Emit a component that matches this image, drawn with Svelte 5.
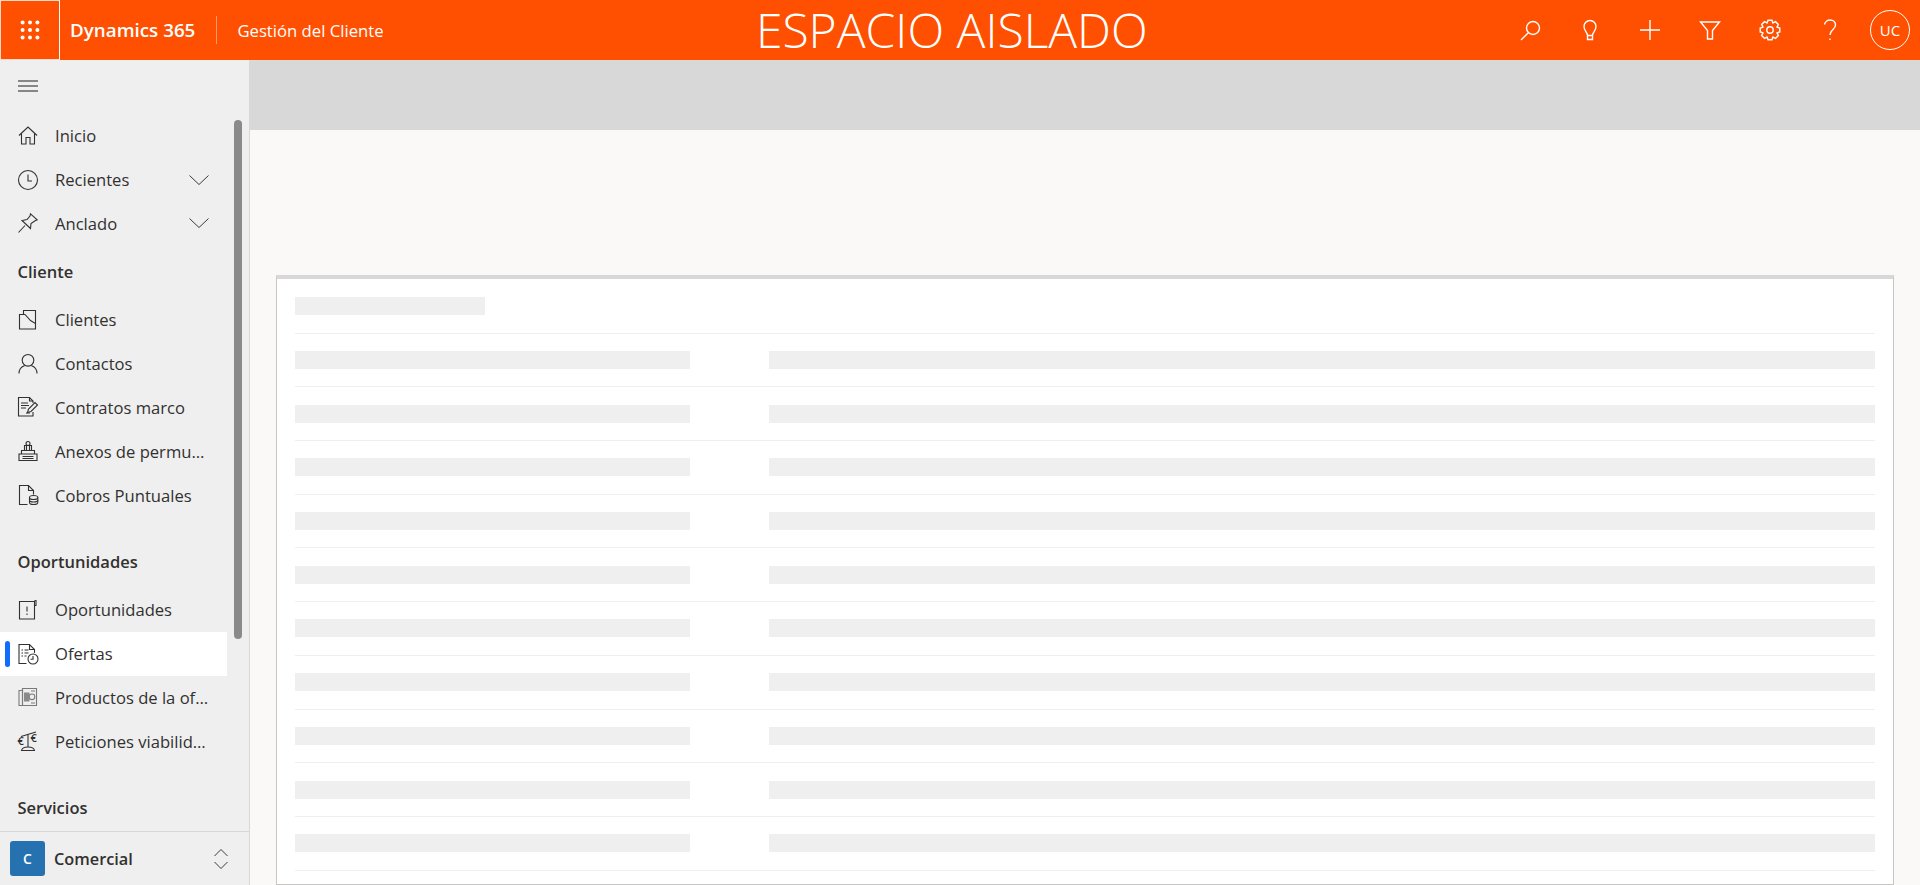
<script lang="ts">
	type Item = { label: string; icon: string; more?: boolean; active?: boolean };

	const top: Item[] = [
		{ label: 'Inicio', icon: 'home' },
		{ label: 'Recientes', icon: 'clock', more: true },
		{ label: 'Anclado', icon: 'pin', more: true }
	];

	const groups: { title: string; items: Item[] }[] = [
		{
			title: 'Cliente',
			items: [
				{ label: 'Clientes', icon: 'account' },
				{ label: 'Contactos', icon: 'contact' },
				{ label: 'Contratos marco', icon: 'contract' },
				{ label: 'Anexos de permutas', icon: 'annex' },
				{ label: 'Cobros Puntuales', icon: 'coins' }
			]
		},
		{
			title: 'Oportunidades',
			items: [
				{ label: 'Oportunidades', icon: 'opportunity' },
				{ label: 'Ofertas', icon: 'quote', active: true },
				{ label: 'Productos de la oferta', icon: 'products' },
				{ label: 'Peticiones viabilidad', icon: 'scale' }
			]
		},
		{ title: 'Servicios', items: [] }
	];

	const icons: Record<string, string[]> = {
		home: ['M1 9.5 10 1l9 8.5', 'M3.5 7.5V18H8v-6.5h4V18h4.500V7.500'],
		clock: ['M10 .5a9.500 9.500 0 1 0 0 19 9.500 9.500 0 0 0 0-19Z', 'M10 4.500V11h4'],
		pin: ['M.5 19.500 7 12.500', 'M12.500 .8 19.200 6.800l-1.700.7-4.500 3L12.500 15.500 4 7.500l5-1L12 3Z'],
		account: ['M5.500 4.500V.5h12v13', 'M1.500 4.500H7l5.500 6 5 3v5.500h-16Z'],
		contact: ['M10 .5a5.800 5.800 0 1 0 0 11.600A5.800 5.800 0 0 0 10 .5Z', 'M1 19.500c0-4.500 3-7 5.800-8', 'M19 19.500c0-4.500-3-7-5.800-8'],
		contract: ['M15 6V4l-3.500-3.500H.5v18.500H15v-4', 'M11.500.5V4H15', 'M3 6h7M3 8.500h8M3 11h5M8 16h4', 'M9.500 15.500l1-3.500 6.500-6.500 2.500 2.500-6.500 6.500Z'],
		annex: ['M1 13h18v6.500H1Z', 'M3.500 13V9.500h13V13', 'M6.500 9.500V4.500h7v5', 'M8.500 9.500V4.500M11.500 4.500v5', 'M10 4.500a2 2 0 1 1 0-4 2 2 0 0 1 0 4Z', 'M4.500 15.500h11M4.500 17.500h11'],
		coins: ['M9.500 19.500H1.500V.5H10.500l5 5v4', 'M10.500 .5v5h5', 'M11.500 12.500c0-1.100 1.800-2 4-2s4.300.9 4.300 2-2.100 2-4.300 2-4-.9-4-2Z', 'M11.500 12.500v5c0 1.100 1.800 2 4 2s4.300-.9 4.300-2v-5', 'M11.500 15c0 1.100 1.800 2 4 2s4.300-.9 4.300-2'],
		opportunity: ['M1.500 1.500H16.500v17.500H1.500Z', 'M16.500 5.500h1.500V.5h-1.500', 'M9 6.500v5M9 13.500v1.500'],
		quote: ['M8.500 19.500H1V.5H11.500l5 5v3.500', 'M11.500 .5v5h5', 'M3.500 6h1.500M6.500 6h4M3.500 9h1.500M6.500 9h4M3.500 12h1.500M6.500 12h2', 'M15 10a5 5 0 1 0 0 10 5 5 0 0 0 0-10Z', 'M15 12v3.200h-2.500'],
		products: ['M1 3.500h3.500v15H1Z', 'M4.500 1.500H18.500V18.500H4.500Z', 'M14 7a2.800 2.800 0 1 0 0 5.600A2.800 2.800 0 0 0 14 7Z', 'M13 4h4M13 16h4'],
		scale: ['M10 3.500V16', 'M3 5.500 18 1', 'M3.500 19.500c.5-2.500 3.500-3.500 6.500-3.500s6 1 6.500 3.500Z']
	};

	// gear outline for the settings button, eight teeth round (0,0)
	const gear = Array.from({ length: 8 }, (_, i) => {
		const a = (i * Math.PI) / 4;
		const pt = (r: number, da: number) => `${(r * Math.sin(a + da)).toFixed(2)} ${(-r * Math.cos(a + da)).toFixed(2)}`;
		return `${i ? 'L' : 'M'}${pt(7.6, -0.39)}L${pt(10, -0.2)}L${pt(10, 0.2)}L${pt(7.6, 0.39)}`;
	}).join('') + 'Z';

	const rows = Array.from({ length: 10 }, (_, i) => i);
</script>

{#snippet chevron()}
	<svg class="chevron" viewBox="0 0 20 10" aria-hidden="true"><path d="M.5.5 10 9.500 19.500.5" /></svg>
{/snippet}

{#snippet navItem(item: Item)}
	<a class="item" class:active={item.active} href="#top">
		<svg class="icon" class:faded={item.icon === 'products'} viewBox="0 0 20 20" aria-hidden="true">
			{#each icons[item.icon] as d}
				<path {d} />
			{/each}
			{#if item.icon === 'products'}
				<rect class="shade" x="6" y="5.500" width="5.500" height="9" />
			{/if}
			{#if item.icon === 'scale'}
				<text x="-.5" y="14" class="euro">€</text>
				<text x="12.500" y="11" class="euro">€</text>
			{/if}
		</svg>
		<span class="label">{item.label}</span>
		{#if item.more}
			{@render chevron()}
		{/if}
	</a>
{/snippet}

<div class="app">
	<header class="topbar">
		<div class="brand">
			<button class="waffle" aria-label="Aplicaciones">
				<svg viewBox="0 0 20 20" aria-hidden="true">
					{#each [2.600, 10, 17.400] as cy}
						{#each [2.600, 10, 17.400] as cx}
							<circle {cx} {cy} r="2" />
						{/each}
					{/each}
				</svg>
			</button>
			<span class="product">Dynamics 365</span>
			<span class="app-name">Gestión del Cliente</span>
		</div>
		<div class="env">ESPACIO AISLADO</div>
		<div class="actions">
			<button aria-label="Buscar">
				<svg viewBox="0 0 24 24"><path d="M15 3.500a6.500 6.500 0 1 0 0 13 6.500 6.500 0 0 0 0-13ZM10.300 14.700 3 22" /></svg>
			</button>
			<button aria-label="Ideas">
				<svg viewBox="0 0 24 24"><path d="M9.500 17.500c0-3-3.500-4.500-3.500-9a6 6 0 0 1 12 0c0 4.500-3.500 6-3.500 9ZM9.500 17.500V21.500h5v-4" /></svg>
			</button>
			<button aria-label="Nuevo">
				<svg viewBox="0 0 24 24"><path d="M12 2v20M2 12h20" /></svg>
			</button>
			<button aria-label="Filtros">
				<svg viewBox="0 0 24 24"><path d="M2.500 4h19L14.500 12.500V21h-5v-8.500Z" /></svg>
			</button>
			<button aria-label="Configuración">
				<svg viewBox="-12 -12 24 24"><path d={gear} /><circle r="3.200" /></svg>
			</button>
			<button aria-label="Ayuda">
				<svg viewBox="0 0 24 24"><path d="M6.500 6.500C7 4 9.500 2 12 2c3 0 5.500 2 5.500 5 0 4.500-5.500 4.500-5.500 10M12 20.500v1.500" /></svg>
			</button>
			<span class="avatar">UC</span>
		</div>
	</header>

	<div class="body">
		<aside class="sidebar">
			<button class="menu" aria-label="Menú">
				<svg viewBox="0 0 20 12" aria-hidden="true"><path d="M0 1h20M0 6h20M0 11h20" /></svg>
			</button>
			<nav class="nav">
				<div class="thumb"></div>
				{#each top as item}
					{@render navItem(item)}
				{/each}
				{#each groups as group}
					<section class="group">
						<h2>{group.title}</h2>
						{#each group.items as item}
							{@render navItem(item)}
						{/each}
					</section>
				{/each}
			</nav>
			<div class="area">
				<span class="badge">C</span>
				<span class="area-name">Comercial</span>
				<svg viewBox="0 0 14 20" aria-hidden="true"><path d="M.5 7 7 .5 13.500 7M.5 13 7 19.500 13.500 13" /></svg>
			</div>
		</aside>

		<main class="main">
			<div class="band"></div>
			<div class="content">
				<div class="card">
					<div class="row head"><span class="bar title"></span></div>
					{#each rows as _}
						<div class="row cols"><span class="bar"></span><span class="bar"></span></div>
					{/each}
				</div>
			</div>
		</main>
	</div>
</div>

<style>
	:global(body) {
		margin: 0;
		overflow: hidden;
	}

	.app {
		display: flex;
		flex-direction: column;
		height: 885px;
		font-family: 'Open Sans', 'Liberation Sans', sans-serif;
		color: #323130;
	}

	button {
		background: none;
		border: 0;
		padding: 0;
		display: flex;
		align-items: center;
		justify-content: center;
	}

	/* top bar */
	.topbar {
		flex: none;
		height: 60px;
		display: flex;
		align-items: center;
		background: #fe5000;
		color: #fff;
	}

	.brand {
		display: flex;
		align-items: center;
		padding-right: 20px;
	}

	.waffle {
		width: 60px;
		height: 60px;
		box-sizing: border-box;
		border: 1px solid #fff;
		border-left-color: #ffd9c7;
		border-top-color: #ffd9c7;
		border-bottom-color: #ffd9c7;
	}

	.waffle svg {
		width: 20px;
		height: 20px;
		fill: #fff;
	}

	.product {
		margin-left: 10px;
		font-size: 18.800px;
		font-weight: 600;
	}

	.app-name {
		margin-left: 21px;
		padding-left: 21px;
		font-size: 16.700px;
		position: relative;
	}

	.app-name::before {
		content: '';
		position: absolute;
		left: 0;
		top: -3px;
		bottom: -2px;
		width: 1px;
		background: #ff9a6b;
	}

	.env {
		margin: 0 auto;
		font-size: 48px;
		font-weight: 300;
		line-height: 60px;
		white-space: nowrap;
	}

	.actions {
		display: flex;
		align-items: center;
	}

	.actions button {
		width: 60px;
		height: 60px;
	}

	.actions svg {
		width: 24px;
		height: 24px;
		fill: none;
		stroke: #fff;
		stroke-width: 1.400;
	}

	.avatar {
		width: 40px;
		height: 40px;
		margin: 0 10px;
		box-sizing: border-box;
		border: 1px solid #fff;
		border-radius: 50%;
		display: flex;
		align-items: center;
		justify-content: center;
		font-size: 15px;
	}

	/* sidebar */
	.body {
		flex: 1;
		display: flex;
		min-height: 0;
	}

	.sidebar {
		flex: none;
		width: 249px;
		display: flex;
		flex-direction: column;
		background: #efefef;
	}

	.menu {
		flex: none;
		width: 20px;
		height: 52px;
		margin-left: 18px;
	}

	.menu svg {
		width: 20px;
		height: 12px;
		fill: none;
		stroke: #201f1e;
		stroke-width: 1;
	}

	.nav {
		flex: 1;
		min-height: 0;
		padding-top: 2px;
		overflow: hidden;
		position: relative;
	}

	.thumb {
		position: absolute;
		left: 234px;
		top: 8px;
		width: 8px;
		height: 519px;
		border-radius: 4px;
		background: #8a8a8a;
	}

	.item {
		width: 227px;
		height: 43.800px;
		box-sizing: border-box;
		padding: 0 18px;
		display: flex;
		align-items: center;
		position: relative;
		color: #323130;
		text-decoration: none;
		font-size: 16.600px;
	}

	.item.active {
		background: #fff;
	}

	.item.active::before {
		content: '';
		position: absolute;
		left: 5px;
		top: 9px;
		bottom: 9px;
		width: 5px;
		border-radius: 3px;
		background: #0f6cff;
	}

	.icon {
		flex: none;
		width: 20px;
		height: 20px;
		margin-right: 17px;
		fill: none;
		stroke: #323130;
		stroke-width: 1.100;
		overflow: visible;
	}

	.icon.faded {
		stroke: #7a7a7a;
	}

	.shade {
		fill: #8a8a8a;
		stroke: none;
	}

	.euro {
		font-size: 11px;
		font-weight: 600;
		fill: #323130;
		stroke: none;
	}

	.label {
		max-width: 154px;
		overflow: hidden;
		white-space: nowrap;
		text-overflow: ellipsis;
	}

	.chevron {
		flex: none;
		width: 20px;
		height: 10px;
		margin-left: auto;
		fill: none;
		stroke: #3b3a39;
		stroke-width: 1;
	}

	.group {
		margin-top: 18.400px;
	}

	.group:first-of-type {
		margin-top: 0;
	}

	.group h2 {
		margin: 0;
		height: 52.600px;
		padding: 0 17.500px;
		box-sizing: border-box;
		display: flex;
		align-items: center;
		font-size: 16.500px;
		font-weight: 600;
	}

	.area {
		flex: none;
		height: 54px;
		box-sizing: border-box;
		border-top: 1px solid #d8d8d8;
		padding-left: 10px;
		display: flex;
		align-items: center;
	}

	.badge {
		width: 35px;
		height: 35px;
		border-radius: 3px;
		background: #2672b0;
		color: #fff;
		font-size: 14px;
		font-weight: 600;
		display: flex;
		align-items: center;
		justify-content: center;
	}

	.area-name {
		margin-left: 9px;
		font-size: 16.300px;
		font-weight: 600;
	}

	.area svg {
		width: 14px;
		height: 20px;
		margin-left: auto;
		margin-right: 21px;
		fill: none;
		stroke: #3b3a39;
		stroke-width: 1;
	}

	/* loading placeholder */
	.main {
		flex: 1;
		min-width: 0;
		display: flex;
		flex-direction: column;
		background: #faf9f7;
		border-left: 1px solid #d8d8d8;
	}

	.band {
		flex: none;
		height: 70px;
		margin-left: -1px;
		background: #d8d8d8;
	}

	.content {
		flex: 1;
		min-height: 0;
		display: flex;
		padding: 145px 26px 0 26px;
	}

	.card {
		flex: 1;
		box-sizing: border-box;
		padding: 0 18px;
		background: #fff;
		border: 1px solid #c8c6c4;
		border-top: 4px solid #d8d8d8;
	}

	.row {
		height: 53.700px;
		box-sizing: border-box;
		border-bottom: 1px solid #efefef;
		display: grid;
		align-items: center;
	}

	.row.head {
		height: 54.700px;
	}

	.row.cols {
		grid-template-columns: 395px 1fr;
		column-gap: 79px;
	}

	.bar {
		height: 18px;
		background: #efefef;
	}

	.bar.title {
		width: 190px;
	}
</style>
